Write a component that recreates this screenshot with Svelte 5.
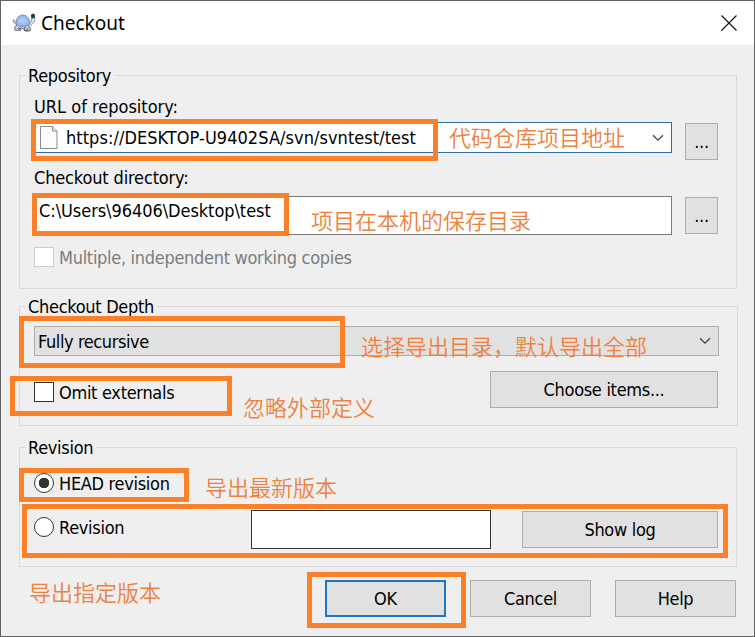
<script lang="ts">
	let url = $state('https://DESKTOP-U9402SA/svn/svntest/test');
	let directory = $state('C:\\Users\\96406\\Desktop\\test');
	let omitExternals = $state(false);
	let revisionType = $state('head');
	let revision = $state('');

	const notes = [
		{ text: '代码仓库项目地址', x: 449, y: 120 },
		{ text: '项目在本机的保存目录', x: 311, y: 203 },
		{ text: '选择导出目录，默认导出全部', x: 361, y: 329 },
		{ text: '忽略外部定义', x: 243, y: 390 },
		{ text: '导出最新版本', x: 205, y: 470 },
		{ text: '导出指定版本', x: 29, y: 575 }
	];

	const marks = [
		{ x: 31, y: 119, w: 407, h: 42 },
		{ x: 32, y: 193, w: 257, h: 43 },
		{ x: 19, y: 316, w: 326, h: 52 },
		{ x: 10, y: 376, w: 222, h: 40 },
		{ x: 19, y: 468, w: 170, h: 34 },
		{ x: 22, y: 504, w: 706, h: 54 },
		{ x: 307, y: 572, w: 159, h: 56 }
	];
</script>

{#snippet chevron()}
	<svg class="chevron" width="12" height="8" viewBox="0 0 12 8">
		<path d="M1 1.2 6 6.2 11 1.2" fill="none" stroke="#444" stroke-width="1.3" />
	</svg>
{/snippet}

<div class="window">
	<header class="titlebar">
		<svg class="logo" width="24" height="20" viewBox="0 0 24 20">
			<path d="M4 9 1 6.5 1.5 9.5 5 12" fill="#d5dbe3" stroke="#7d8590" stroke-width="0.8" />
			<path d="M17 10c2-1 3-2 2.500-5l2-2 1.500 2c0 4-2 6-5 8" fill="#dbe4ee" stroke="#7a8390" stroke-width="0.8" />
			<path d="M5 12c-2 1-3 3-2 5l4 .5 2-3 3 2 1 1.500h5c1-2 0-4-2-6" fill="#c6cbd2" stroke="#555c66" stroke-width="0.9" />
			<path d="M4 11C4 5 7 2 11 2s7 4 7 9c-3 3-11 3-14 0Z" fill="#9dbdf0" stroke="#6e85ad" stroke-width="0.9" />
			<path d="M7 5.500 10 4l4 1 2 4-3 2H8L6 9Z" fill="#adc9f7" stroke="#8ca9da" stroke-width="0.5" />
			<path d="m6 15 3 1-1 2M13 14l-1 3 3 1 1-3" fill="none" stroke="#3f4854" stroke-width="0.8" />
			<ellipse cx="21" cy="3" rx="2.100" ry="2.600" fill="#1d4055" />
		</svg>
		<span class="title">Checkout</span>
		<svg class="close" width="16" height="16" viewBox="0 0 16 16">
			<path d="M.5.5 15.500 15.500M15.500.5.5 15.500" stroke="#111" stroke-width="1.2" />
		</svg>
	</header>

	<main class="body">
		<fieldset class="repository">
			<legend>Repository</legend>
			<div class="label url-label">URL of repository:</div>
			<div class="row url-row">
				<div class="combo editable">
					<svg class="page" width="18" height="23" viewBox="0 0 18 23">
						<path d="M.5.5H12.500L17 5V22.500H.5Z" fill="#fdfdfd" stroke="#8b8b8b" />
						<path d="M12.500.5V5H17" fill="#eee" stroke="#8b8b8b" />
					</svg>
					<span class="url">{url}</span>
					{@render chevron()}
				</div>
				<button class="browse">...</button>
			</div>
			<div class="label directory-label">Checkout directory:</div>
			<div class="row directory-row">
				<div class="field directory">{directory}</div>
				<button class="browse">...</button>
			</div>
			<div class="option disabled">
				<span class="check"></span>
				<span class="text">Multiple, independent working copies</span>
			</div>
		</fieldset>

		<fieldset class="depth">
			<legend>Checkout Depth</legend>
			<div class="combo depth-combo">
				<span>Fully recursive</span>
				{@render chevron()}
			</div>
			<div class="row depth-row">
				<button class="option" onclick={() => (omitExternals = !omitExternals)}>
					<span class="check" class:checked={omitExternals}></span>
					<span class="text">Omit externals</span>
				</button>
				<button class="push choose">Choose items...</button>
			</div>
		</fieldset>

		<fieldset class="revision">
			<legend>Revision</legend>
			<button class="option head" onclick={() => (revisionType = 'head')}>
				<span class="radio" class:selected={revisionType === 'head'}></span>
				<span class="text">HEAD revision</span>
			</button>
			<div class="row revision-row">
				<button class="option number" onclick={() => (revisionType = 'number')}>
					<span class="radio" class:selected={revisionType === 'number'}></span>
					<span class="text">Revision</span>
				</button>
				<input class="revision-input" bind:value={revision} />
				<button class="push log">Show log</button>
			</div>
		</fieldset>

		<footer class="actions">
			<button class="push default">OK</button>
			<button class="push">Cancel</button>
			<button class="push">Help</button>
		</footer>
	</main>

	{#each marks as mark}
		<div
			class="mark"
			style="left: {mark.x}px; top: {mark.y}px; width: {mark.w}px; height: {mark.h}px"
		></div>
	{/each}
	{#each notes as note}
		<div class="note" style="left: {note.x}px; top: {note.y}px">{note.text}</div>
	{/each}
</div>

<style>
	:global(body) {
		margin: 0;
		overflow: hidden;
	}

	.window,
	.window * {
		box-sizing: border-box;
	}

	.window {
		position: relative;
		width: 755px;
		height: 637px;
		background: #efefef;
		box-shadow: inset 0 0 0 1px #626262;
		padding: 1px;
		font-family: 'DejaVu Sans Condensed', 'DejaVu Sans', sans-serif;
		font-stretch: condensed;
		font-size: 18px;
		line-height: 22px;
		letter-spacing: -0.3px;
		color: #000;
		white-space: nowrap;
	}

	button {
		font: inherit;
		color: inherit;
		letter-spacing: inherit;
		padding: 0;
	}

	.titlebar {
		display: flex;
		align-items: center;
		height: 44px;
		padding: 0 17px 0 11px;
		background: #fff;
	}

	.title {
		flex: 1;
		margin-left: 5px;
		font-family: 'Noto Sans', sans-serif;
		font-stretch: normal;
		font-size: 19px;
		letter-spacing: 0;
	}

	.body {
		padding: 20px 17px 0 18px;
	}

	fieldset {
		margin: 0;
		padding: 0 18px 0 14px;
		border: 1px solid #dadada;
	}

	legend {
		height: 21px;
		line-height: 21px;
		margin-left: -8px;
		padding: 0 3px 0 2px;
	}

	.repository {
		height: 224px;
	}

	.depth {
		height: 130px;
		margin-top: 7px;
	}

	.revision {
		height: 130px;
		margin-top: 11px;
	}

	.row {
		display: flex;
	}

	.label {
		margin-top: 10px;
	}

	.url-label {
		letter-spacing: 0;
	}

	.url-row {
		margin-top: 4px;
	}

	.directory-label {
		margin-top: 7px;
		letter-spacing: -0.15px;
	}

	.directory-row {
		margin-top: 7px;
	}

	.combo {
		display: flex;
		align-items: center;
		padding: 0 7px 0 3px;
		border: 1px solid #adadad;
		background: #e1e1e1;
	}

	.combo .chevron {
		margin-left: auto;
	}

	.editable {
		width: 638px;
		height: 31px;
		padding-left: 5px;
		border-color: #2d6da3;
		background: #fff;
	}

	.url {
		margin-left: 8px;
		letter-spacing: 0.05px;
	}

	.field {
		border: 1px solid #7a7a7a;
		background: #fff;
	}

	.directory {
		width: 638px;
		height: 39px;
		padding: 3px 4px;
		letter-spacing: -0.06px;
	}

	.browse,
	.push {
		display: flex;
		align-items: center;
		justify-content: center;
		height: 37px;
		border: 1px solid #adadad;
		background: #e1e1e1;
	}

	.browse {
		width: 33px;
		margin: 1px 0 0 13px;
	}

	.option {
		display: flex;
		align-items: center;
		gap: 5px;
		height: 20px;
		border: 0;
		background: none;
	}

	.text {
		padding-top: 2px;
	}

	.disabled {
		margin-top: 12px;
		color: #7c7c7c;
	}

	.check,
	.radio {
		width: 20px;
		height: 20px;
		border: 1px solid #333;
		background: #fff;
	}

	.disabled .check {
		border-color: #ccc;
	}

	.checked {
		box-shadow: inset 0 0 0 4px #fff;
		background: #333;
	}

	.radio {
		border-radius: 50%;
	}

	.selected {
		background: radial-gradient(circle, #333 5px, #fff 5.5px);
	}

	.depth-combo {
		width: 685px;
		height: 30px;
		margin-top: 9px;
		letter-spacing: -0.4px;
	}

	.depth-combo span {
		padding-top: 2px;
	}

	.depth-row {
		margin-top: 15px;
		justify-content: space-between;
	}

	.depth-row .option {
		margin-top: 11px;
	}

	.choose {
		width: 228px;
		margin-right: 1px;
	}

	.head {
		margin-top: 15px;
	}

	.revision-row {
		margin-top: 17px;
	}

	.number {
		width: 217px;
		margin-top: 7px;
	}

	.revision-input {
		width: 240px;
		height: 39px;
		border: 1px solid #333;
		background: #fff;
		font: inherit;
		outline: none;
	}

	.log {
		width: 196px;
		margin: 1px 0 0 31px;
	}

	.actions {
		display: flex;
		justify-content: flex-end;
		gap: 24px;
		padding-right: 1px;
		margin-top: 13px;
	}

	.actions .push {
		width: 121px;
	}

	.actions .default {
		border: 2px solid #1b78c8;
	}

	.mark {
		position: absolute;
		border: 5px solid #fa812a;
		pointer-events: none;
	}

	.note {
		position: absolute;
		font-family: 'Noto Sans CJK SC', sans-serif;
		font-stretch: normal;
		font-size: 22px;
		font-weight: 350;
		letter-spacing: 0;
		line-height: 32px;
		color: #ee8140;
		pointer-events: none;
	}
</style>
